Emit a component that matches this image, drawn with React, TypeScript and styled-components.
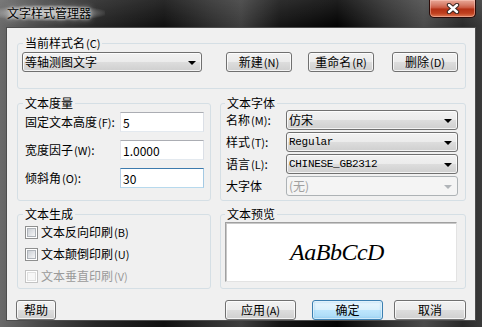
import React from 'react';
import styled, { createGlobalStyle, css } from 'styled-components';

const GlobalStyle = createGlobalStyle`
  html, body {
    margin: 0;
    padding: 0;
    background: #000;
  }
  body {
    font-family: "Noto Sans CJK SC", "Liberation Sans", sans-serif;
    font-size: 12px;
    color: #000;
  }
  * { box-sizing: border-box; }
`;

const Window = styled.div`
  width: 482px;
  height: 327px;
  display: flex;
  flex-direction: column;
  background:
    linear-gradient(180deg, rgba(255, 255, 255, 0.1) 0, rgba(255, 255, 255, 0) 26px),
    linear-gradient(90deg, #6a6a6a 0, #4a4a4a 8%, #262626 20%, #111 34%, #2f2f2f 44%, #3e3e3e 50%, #161616 58%, #050505 70%, #2e2e2e 80%, #4a4a4a 88%, #2a2a2a 96%, #3a3a3a 100%);
`;

const TitleBar = styled.div`
  height: 27px;
  flex: none;
  display: flex;
  justify-content: space-between;
  align-items: flex-start;
  padding-right: 6px;
`;

const Caption = styled.div`
  margin-top: 5px;
  padding: 1px 14px 1px 7px;
  line-height: 14px;
  font-size: 12px;
  color: #000;
  background: radial-gradient(ellipse at 45% 50%, rgba(220, 220, 220, 0.75) 0, rgba(200, 200, 200, 0.45) 50%, rgba(160, 160, 160, 0) 75%);
  text-shadow: 0 0 6px rgba(255, 255, 255, 0.9), 0 0 3px rgba(255, 255, 255, 0.8);
`;

const CloseButton = styled.div`
  width: 47px;
  height: 18px;
  display: flex;
  align-items: center;
  justify-content: center;
  border: 1px solid #2b0b08;
  border-top: none;
  border-radius: 0 0 5px 5px;
  background: linear-gradient(180deg, #e9a898 0, #d57a66 30%, #c8533b 48%, #b23015 52%, #c0401f 78%, #de7a55 100%);
  box-shadow: inset 0 0 0 1px rgba(255, 210, 200, 0.45);
`;

const Client = styled.div`
  flex: 1;
  margin: 0 6px 6px;
  border: 1px solid #4d4d4d;
  background: #f0f0f0;
  padding: 8px 9px 0 10px;
  display: flex;
  flex-direction: column;
`;

const Group = styled.fieldset<{ $width?: number }>`
  margin: 0;
  padding: 0;
  min-width: 0;
  border: 1px solid #d5dfe5;
  border-radius: 3px;
  ${({ $width }) => ($width ? css`width: ${$width}px; flex: none;` : css`flex: 1;`)}
`;

const Legend = styled.legend<{ $indent?: number }>`
  margin-left: ${({ $indent }) => $indent ?? 5}px;
  padding: 0 2px;
  line-height: 14px;
  font-size: 12px;
`;

const GroupRow = styled.div<{ $gap: number }>`
  display: flex;
  align-items: stretch;
  gap: 9px;
  margin-top: ${({ $gap }) => $gap}px;
`;

const StyleRow = styled.div`
  display: flex;
  align-items: center;
  padding: 2px 7px 8px 4px;
`;

const buttonFace = css`
  border: 1px solid #707070;
  border-radius: 3px;
  background: linear-gradient(180deg, #f2f2f2 0, #ebebeb 50%, #dddddd 50%, #cfcfcf 100%);
  box-shadow: inset 0 0 0 1px rgba(255, 255, 255, 0.75);
`;

const Button = styled.div<{ $width: number; $gap?: number; $default?: boolean }>`
  ${buttonFace}
  width: ${({ $width }) => $width}px;
  height: 20px;
  margin-left: ${({ $gap }) => $gap ?? 0}px;
  flex: none;
  display: flex;
  align-items: center;
  justify-content: center;
  line-height: 14px;
  font-size: 12px;
  ${({ $default }) =>
    $default &&
    css`
      border-color: #3c7fb1;
      background: linear-gradient(180deg, #eaf6fd 0, #d9f0fc 50%, #bee6fd 50%, #a7d9f5 100%);
      box-shadow: inset 0 0 0 1px rgba(255, 255, 255, 0.6), inset 0 0 2px 1px rgba(90, 180, 230, 0.5);
    `}
`;

const Mnemonic = styled.span`
  font-size: 11px;
  margin-left: 1px;
`;

const Combo = styled.div<{ $width: number; $disabled?: boolean }>`
  ${buttonFace}
  width: ${({ $width }) => $width}px;
  height: 20px;
  flex: none;
  display: flex;
  align-items: center;
  padding: 0 5px 0 2px;
  line-height: 14px;
  ${({ $disabled }) =>
    $disabled &&
    css`
      border-color: #adb2b5;
      background: #f4f4f4;
      box-shadow: none;
      color: #a0a0a0;
    `}
`;

const ComboText = styled.span<{ $mono?: boolean }>`
  flex: 1;
  white-space: nowrap;
  ${({ $mono }) =>
    $mono &&
    css`
      font-family: "Liberation Mono", "Noto Sans CJK SC", monospace;
      font-size: 11px;
      letter-spacing: -0.3px;
    `}
`;

const Arrow = styled.span<{ $disabled?: boolean }>`
  width: 0;
  height: 0;
  border-left: 4px solid transparent;
  border-right: 4px solid transparent;
  border-top: 4px solid ${({ $disabled }) => ($disabled ? '#b0b4b8' : '#000')};
  margin-top: 1px;
`;

const MetricsGrid = styled.div`
  display: grid;
  grid-template-columns: 95px 84px;
  row-gap: 8px;
  align-items: center;
  padding: 2px 6px 0 7px;
`;

const FontGrid = styled.div`
  display: grid;
  grid-template-columns: 60px 172px;
  row-gap: 2px;
  align-items: center;
  padding: 0 8px 4px 5px;
`;

const Label = styled.span<{ $disabled?: boolean }>`
  white-space: nowrap;
  line-height: 14px;
  color: ${({ $disabled }) => ($disabled ? '#9a9a9a' : '#000')};
`;

const TextBox = styled.input<{ $focused?: boolean }>`
  width: 84px;
  height: 20px;
  margin: 0;
  padding: 0 2px;
  font-family: "Noto Sans CJK SC", sans-serif;
  font-size: 12px;
  color: #000;
  background: #fff;
  border: 1px solid;
  border-color: #abadb3 #dbdfe6 #e3e9ef #e2e3ea;
  outline: none;
  ${({ $focused }) =>
    $focused &&
    css`
      border-color: #3d7bad #a4c9e3 #b7d9ed #b5cfe7;
    `}
`;

const CheckList = styled.div`
  display: flex;
  flex-direction: column;
  padding: 0 0 1px 7px;
`;

const CheckRow = styled.div<{ $disabled?: boolean }>`
  height: 22px;
  display: flex;
  align-items: center;
  gap: 3px;
  line-height: 14px;
  color: ${({ $disabled }) => ($disabled ? '#9a9a9a' : '#000')};
`;

const CheckBox = styled.span<{ $disabled?: boolean }>`
  width: 13px;
  height: 13px;
  flex: none;
  border: 1px solid ${({ $disabled }) => ($disabled ? '#c4c4c4' : '#8e8f8f')};
  background: #fff;
  padding: 1px;
  display: flex;
  &::after {
    content: '';
    flex: 1;
    border: 1px solid ${({ $disabled }) => ($disabled ? '#e0e0e0' : '#aeb3b9')};
    background: ${({ $disabled }) =>
      $disabled ? '#f7f7f7' : 'linear-gradient(135deg, #cbcfd5 0, #e4e6e9 60%, #f6f6f6 100%)'};
  }
`;

const PreviewWrap = styled.div`
  padding: 1px 8px 6px 4px;
`;

const Preview = styled.div`
  height: 60px;
  display: flex;
  align-items: center;
  justify-content: center;
  background: #fff;
  border: 1px solid;
  border-color: #a0a0a0 #e3e3e3 #e3e3e3 #a0a0a0;
  box-shadow: inset 1px 1px 0 #c8c8c8;
  font-family: "Liberation Serif", serif;
  font-style: italic;
  font-size: 24px;
  letter-spacing: -0.5px;
  padding-right: 8px;
`;

const BottomRow = styled.div`
  display: flex;
  align-items: center;
  margin: 11px 0 0 -1px;
`;

const Spacer = styled.div`
  flex: 1;
`;

const CloseGlyph = () => (
  <svg width="14" height="11" viewBox="0 0 14 11">
    <path d="M3 2 L11 9 M11 2 L3 9" stroke="#3a2622" strokeWidth="4.4" strokeLinecap="round" />
    <path d="M3 2 L11 9 M11 2 L3 9" stroke="#fff" strokeWidth="2.4" strokeLinecap="round" />
  </svg>
);

const Select = ({ width, text, mono, disabled }: { width: number; text: string; mono?: boolean; disabled?: boolean }) => (
  <Combo $width={width} $disabled={disabled}>
    <ComboText $mono={mono}>{text}</ComboText>
    <Arrow $disabled={disabled} />
  </Combo>
);

export default function App() {
  return (
    <>
      <GlobalStyle />
      <Window>
        <TitleBar>
          <Caption>文字样式管理器</Caption>
          <CloseButton>
            <CloseGlyph />
          </CloseButton>
        </TitleBar>
        <Client>
          <Group>
            <Legend>
              当前样式名<Mnemonic>(C)</Mnemonic>
            </Legend>
            <StyleRow>
              <Select width={180} text="等轴测图文字" />
              <Button $width={66} $gap={24}>新建<Mnemonic>(N)</Mnemonic></Button>
              <Button $width={66} $gap={16}>重命名<Mnemonic>(R)</Mnemonic></Button>
              <Button $width={66} $gap={18}>删除<Mnemonic>(D)</Mnemonic></Button>
            </StyleRow>
          </Group>

          <GroupRow $gap={7}>
            <Group $width={194}>
              <Legend>文本度量</Legend>
              <MetricsGrid>
                <Label>固定文本高度<Mnemonic>(F)</Mnemonic>:</Label>
                <TextBox readOnly defaultValue="5" />
                <Label>宽度因子<Mnemonic>(W)</Mnemonic>:</Label>
                <TextBox readOnly defaultValue="1.0000" />
                <Label>倾斜角<Mnemonic>(O)</Mnemonic>:</Label>
                <TextBox readOnly defaultValue="30" $focused />
              </MetricsGrid>
            </Group>
            <Group>
              <Legend $indent={4}>文本字体</Legend>
              <FontGrid>
                <Label>名称<Mnemonic>(M)</Mnemonic>:</Label>
                <Select width={172} text="仿宋" />
                <Label>样式<Mnemonic>(T)</Mnemonic>:</Label>
                <Select width={172} text="Regular" mono />
                <Label>语言<Mnemonic>(L)</Mnemonic>:</Label>
                <Select width={172} text="CHINESE_GB2312" mono />
                <Label>大字体</Label>
                <Select width={172} text="(无)" disabled />
              </FontGrid>
            </Group>
          </GroupRow>

          <GroupRow $gap={6}>
            <Group $width={194}>
              <Legend>文本生成</Legend>
              <CheckList>
                <CheckRow>
                  <CheckBox />
                  <span>文本反向印刷<Mnemonic>(B)</Mnemonic></span>
                </CheckRow>
                <CheckRow>
                  <CheckBox />
                  <span>文本颠倒印刷<Mnemonic>(U)</Mnemonic></span>
                </CheckRow>
                <CheckRow $disabled>
                  <CheckBox $disabled />
                  <span>文本垂直印刷<Mnemonic>(V)</Mnemonic></span>
                </CheckRow>
              </CheckList>
            </Group>
            <Group>
              <Legend $indent={4}>文本预览</Legend>
              <PreviewWrap>
                <Preview>AaBbCcD</Preview>
              </PreviewWrap>
            </Group>
          </GroupRow>

          <BottomRow>
            <Button $width={40}>帮助</Button>
            <Spacer />
            <Button $width={71}>应用<Mnemonic>(A)</Mnemonic></Button>
            <Button $width={71} $gap={16} $default>确定</Button>
            <Button $width={72} $gap={11}>取消</Button>
          </BottomRow>
        </Client>
      </Window>
    </>
  );
}
